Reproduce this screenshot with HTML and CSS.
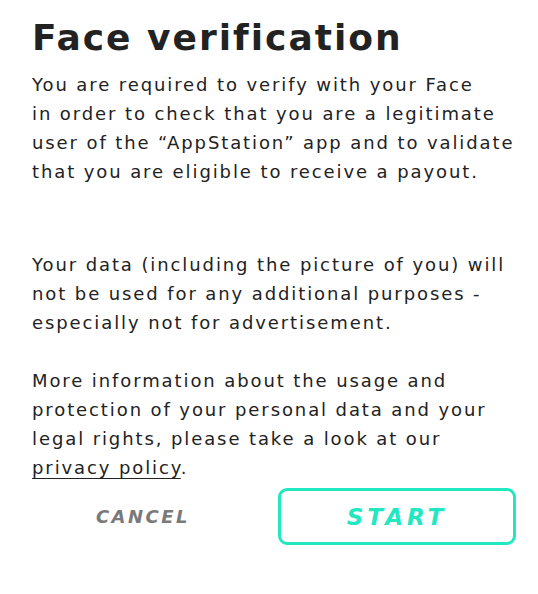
FILE: index.html
```html
<!DOCTYPE html>
<html>
<head>
<meta charset="utf-8">
<link rel="stylesheet" href="styles.css">
</head>
<body>
<main class="screen">
  <h1 class="title">Face verification</h1>
  <p class="text">You are required to verify with your Face<br>in order to check that you are a legitimate<br>user of the “AppStation” app and to validate<br>that you are eligible to receive a payout.</p>
  <p class="text gap-large">Your data (including the picture of you) will<br>not be used for any additional purposes -<br>especially not for advertisement.</p>
  <p class="text">More information about the usage and<br>protection of your personal data and your<br>legal rights, please take a look at our<br><a class="link" href="#">privacy policy</a>.</p>
  <div class="actions">
    <button class="btn btn-cancel">CANCEL</button>
    <button class="btn btn-start">START</button>
  </div>
</main>
</body>
</html>
```
FILE: styles.css
```css
* { box-sizing: border-box; }
html, body { margin: 0; padding: 0; background: #fff; }
body { width: 538px; height: 594px; overflow: hidden; font-family: "DejaVu Sans", "Open Sans", sans-serif; color: #222; }
.screen { padding: 14px 22px 0 32px; }
.title { margin: 0 0 8px; font-size: 36px; line-height: 48px; font-weight: 700; color: #222; letter-spacing: 2px; white-space: nowrap; }
.text { margin: 0; font-size: 18px; line-height: 29px; font-weight: 400; color: #222; letter-spacing: 1.9px; white-space: nowrap; }
.text + .text { margin-top: 29px; }
.text + .gap-large { margin-top: 64px; }
.link { color: #222; text-decoration: underline; text-decoration-thickness: 1px; text-underline-offset: 4px; }
.actions { display: flex; align-items: center; margin-top: 6px; }
.btn { font-family: inherit; background: none; border: none; font-style: italic; font-weight: 700; padding: 0; }
.btn-cancel { width: 222px; text-align: center; font-size: 18px; color: #7a7a7a; letter-spacing: 2.5px; }
.btn-start { margin-left: auto; width: 238px; height: 57px; border: 3px solid #22e8c2; border-radius: 9px; color: #22e8c2; font-size: 23px; letter-spacing: 4px; }
```
